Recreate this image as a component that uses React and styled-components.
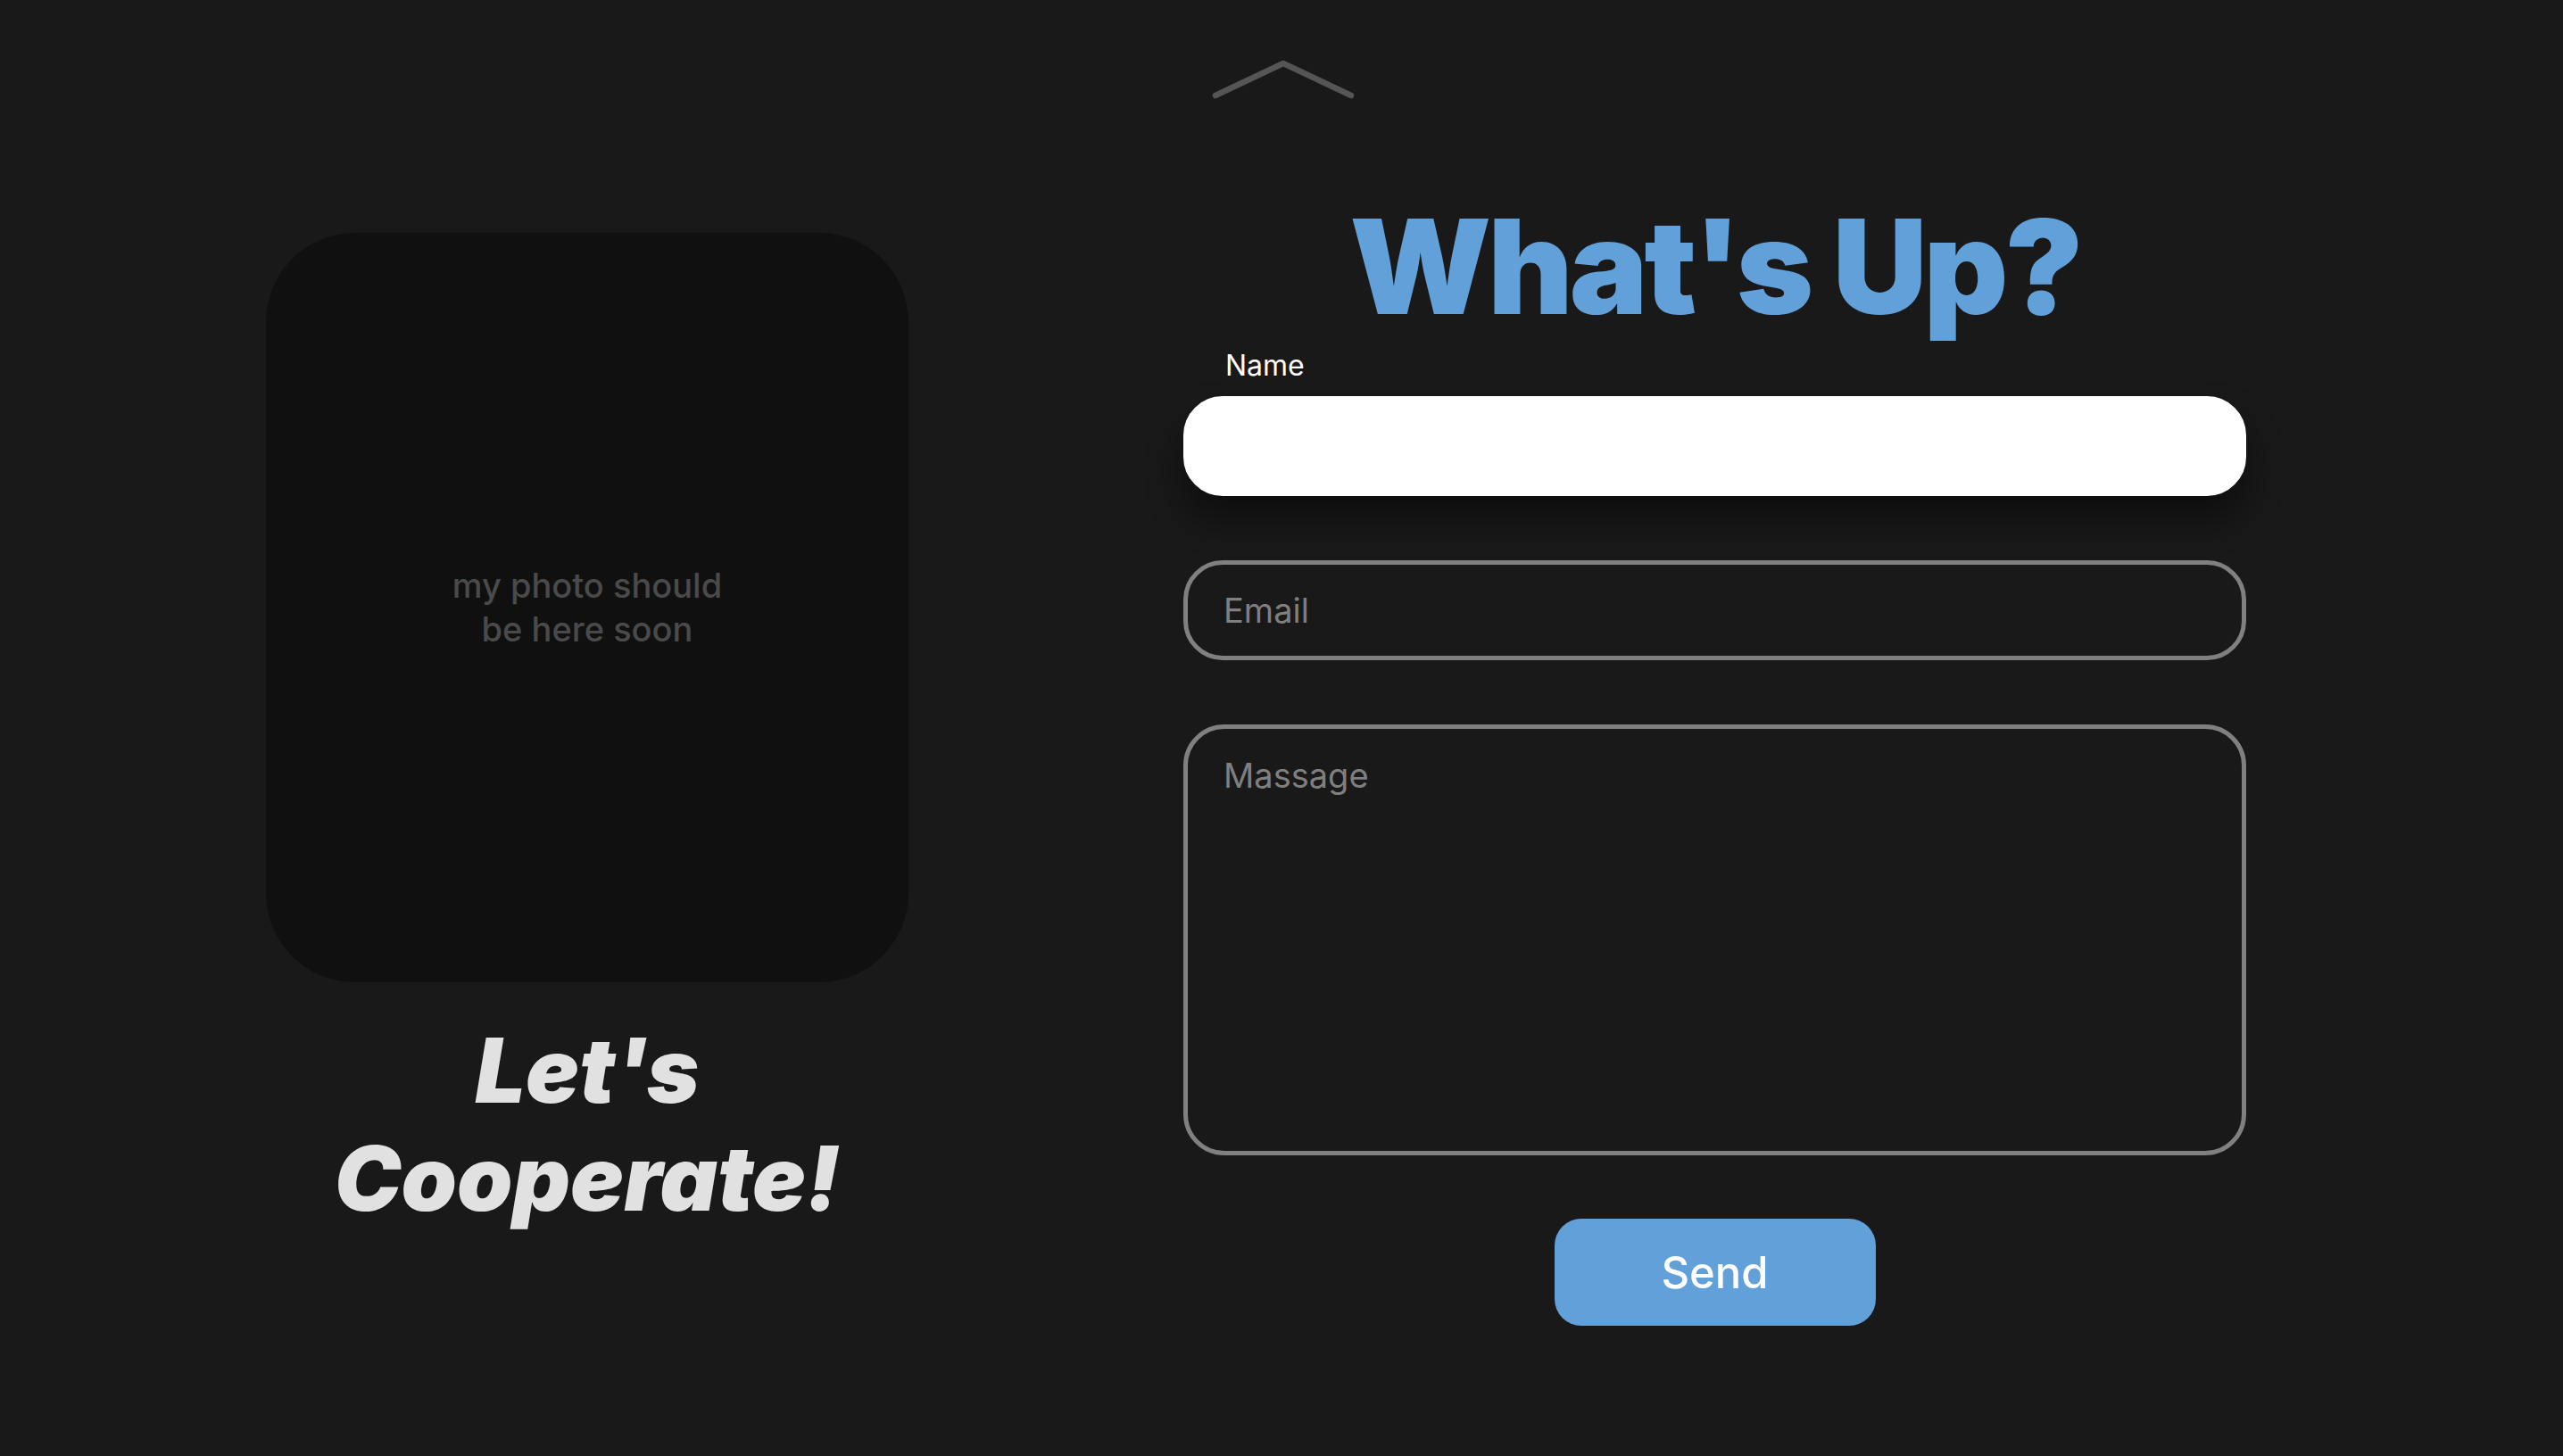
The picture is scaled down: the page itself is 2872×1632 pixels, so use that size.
import React from 'react'
import styled, { createGlobalStyle, css } from 'styled-components'

const GlobalStyle = createGlobalStyle`
  * {
    box-sizing: border-box;
  }
  body {
    margin: 0;
    background: #191919;
    font-family: Inter, 'Noto Sans', sans-serif;
  }
`

const Page = styled.div`
  min-height: 100vh;
  background: #191919;
  display: flex;
  flex-direction: column;
`

const ScrollUp = styled.button`
  align-self: center;
  margin: 67px 0 0 6px;
  padding: 0;
  border: none;
  background: none;
  width: 162px;
  height: 46px;
  cursor: pointer;
  display: block;
`

const Main = styled.main`
  display: flex;
  align-items: flex-start;
  gap: 308px;
  padding-left: 298px;
  margin-top: 112px;
`

const Side = styled.section`
  width: 720px;
  margin-top: 36px;
  display: flex;
  flex-direction: column;
  align-items: center;
`

const Photo = styled.div`
  width: 720px;
  height: 840px;
  border-radius: 100px;
  background: #101010;
  display: flex;
  align-items: center;
  justify-content: center;
  text-align: center;
  color: #4a4a4a;
  font-size: 38px;
  font-weight: 500;
  line-height: 49px;
`

const Slogan = styled.h2`
  margin: 38px 0 0;
  font-size: 100px;
  line-height: 121px;
  font-weight: 900;
  font-style: italic;
  color: #e1e1e1;
  text-align: center;
`

const Contact = styled.form`
  width: 1191px;
  display: flex;
  flex-direction: column;
`

const Title = styled.h1`
  margin: 0;
  align-self: center;
  font-size: 147px;
  line-height: 1;
  font-weight: 900;
  letter-spacing: -4px;
  color: #62a0d9;
  white-space: nowrap;
`

const Label = styled.label`
  margin: 19px 0 15px 47px;
  font-size: 32px;
  line-height: 38px;
  color: #ffffff;
`

const field = css`
  width: 100%;
  font-family: inherit;
  font-size: 38px;
  color: #ffffff;
  outline: none;
  padding: 0 40px;
  border: 5px solid #808080;
  background: transparent;

  &::placeholder {
    color: #7f7f7f;
  }
`

const Input = styled.input`
  ${field}
  height: 112px;
  border-radius: 44px;
  margin-bottom: 72px;

  ${(props) =>
    props.$active &&
    css`
      background: #ffffff;
      border-color: #ffffff;
      color: #191919;
      box-shadow: 0 26px 40px rgba(0, 0, 0, 0.45);
    `}
`

const TextArea = styled.textarea`
  ${field}
  height: 483px;
  border-radius: 46px;
  padding-top: 28px;
  resize: none;
  line-height: 1.3;
`

const SendButton = styled.button`
  align-self: center;
  margin-top: 71px;
  width: 360px;
  height: 120px;
  border: none;
  border-radius: 30px;
  background: #62a0d9;
  color: #ffffff;
  font-family: inherit;
  font-size: 49px;
  font-weight: 500;
  cursor: pointer;
`

function Chevron() {
  return (
    <svg width="162" height="46" viewBox="0 0 162 46">
      <polyline
        points="4,40 80,4 156,40"
        fill="none"
        stroke="#555555"
        strokeWidth="6.5"
        strokeLinecap="round"
        strokeLinejoin="round"
      />
    </svg>
  )
}

export default function App() {
  return (
    <Page>
      <GlobalStyle />
      <ScrollUp type="button" aria-label="Scroll up">
        <Chevron />
      </ScrollUp>
      <Main>
        <Side>
          <Photo>
            my photo should
            <br />
            be here soon
          </Photo>
          <Slogan>Let's Cooperate!</Slogan>
        </Side>
        <Contact onSubmit={(e) => e.preventDefault()}>
          <Title>What's Up?</Title>
          <Label htmlFor="name">Name</Label>
          <Input id="name" $active />
          <Input placeholder="Email" />
          <TextArea placeholder="Massage" />
          <SendButton type="submit">Send</SendButton>
        </Contact>
      </Main>
    </Page>
  )
}
